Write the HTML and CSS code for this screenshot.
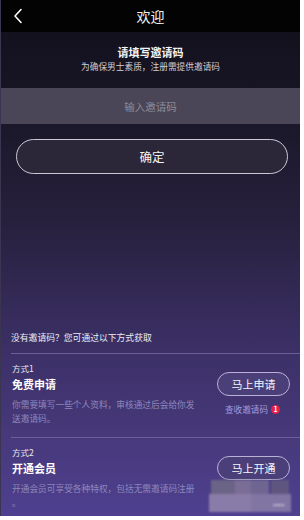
FILE: index.html
```html
<!DOCTYPE html>
<html lang="zh">
<head>
<meta charset="utf-8">
<link rel="stylesheet" href="styles.css">
</head>
<body>
<div class="app">
  <header class="topbar">
    <svg class="back" width="10" height="16" viewBox="0 0 10 16"><path d="M8 1.5 L2 8 L8 14.5" fill="none" stroke="#fff" stroke-width="1.6" stroke-linecap="round" stroke-linejoin="round"/></svg>
    <div class="title">欢迎</div>
  </header>
  <main class="content">
    <div class="intro">
      <div class="intro-title">请填写邀请码</div>
      <div class="intro-sub">为确保男士素质，注册需提供邀请码</div>
    </div>
    <div class="input-band">输入邀请码</div>
    <div class="confirm-wrap"><div class="confirm">确定</div></div>
    <div class="spacer"></div>
    <div class="hint">没有邀请码？您可通过以下方式获取</div>
    <div class="divider"></div>
    <section class="way">
      <div class="way-text">
        <div class="way-label">方式1</div>
        <div class="way-name">免费申请</div>
        <div class="way-desc">你需要填写一些个人资料，审核通过后会给你发送邀请码。</div>
      </div>
      <div class="way-side">
        <div class="pill">马上申请</div>
        <div class="check">查收邀请码<span class="badge">1</span></div>
      </div>
    </section>
    <div class="divider"></div>
    <section class="way">
      <div class="way-text">
        <div class="way-label">方式2</div>
        <div class="way-name">开通会员</div>
        <div class="way-desc">开通会员可享受各种特权，包括无需邀请码注册。</div>
      </div>
      <div class="way-side">
        <div class="pill">马上开通</div>
      </div>
    </section>
  </main>
  <div class="wm">
    <span class="wm-a"></span><span class="wm-b"></span><span class="wm-c"></span><span class="wm-d"></span>
    <span class="wm-e"></span><span class="wm-f"></span>
    <span class="wm-dots">....</span>
  </div>
</div>
</body>
</html>
```

FILE: styles.css
```css
html, body {
  margin: 0;
  padding: 0;
  background: #ffffff;
}
body {
  font-family: "Noto Sans CJK SC", "Noto Sans", sans-serif;
  color: #ffffff;
}
.app {
  position: relative;
  width: 299px;
  height: 516px;
  border-left: 1px solid #3a3550;
  display: flex;
  flex-direction: column;
  overflow: hidden;
  background: linear-gradient(180deg, #12101c 0px, #171424 90px, #1e1a2f 150px, #28213f 230px, #342a57 300px, #3d3169 360px, #463879 430px, #4f4090 516px);
}
.topbar {
  height: 32px;
  background: #030303;
  display: flex;
  align-items: center;
  justify-content: center;
  position: relative;
  flex: none;
}
.back {
  position: absolute;
  left: 12px;
  top: 8px;
}
.title {
  font-size: 14px;
  line-height: 16px;
  color: #f2f2f2;
}
.content {
  flex: 1;
  display: flex;
  flex-direction: column;
}
.intro {
  padding-top: 12px;
  text-align: center;
  height: 44px;
}
.intro-title {
  font-size: 11px;
  line-height: 16px;
  font-weight: 700;
  color: #f4f4f4;
}
.intro-sub {
  font-size: 8.7px;
  line-height: 13px;
  color: #cfcdd6;
}
.input-band {
  height: 36px;
  background: #4a4657;
  color: #8d8a98;
  font-size: 10.5px;
  display: flex;
  align-items: center;
  justify-content: center;
}
.confirm-wrap {
  padding: 15px 12px 0 15px;
}
.confirm {
  height: 33px;
  border: 1px solid #cbc7d4;
  border-radius: 18px;
  background: #2b2739;
  display: flex;
  align-items: center;
  justify-content: center;
  font-size: 12.5px;
  color: #f4f4f4;
}
.spacer {
  height: 158px;
}
.hint {
  padding-left: 10px;
  font-size: 8.8px;
  line-height: 12px;
  color: #ececf2;
}
.divider {
  margin: 9px 0 0 10px;
  height: 1px;
  background: #6b5f98;
}
.way {
  display: flex;
  padding: 9px 0 0 11px;
  height: 74px;
  box-sizing: border-box;
}
.way-text {
  flex: 1;
  min-width: 0;
}
.way-label {
  font-size: 8.5px;
  line-height: 11px;
  color: #e8e6f0;
}
.way-name {
  margin-top: 3px;
  font-size: 11px;
  line-height: 14px;
  font-weight: 700;
  color: #ffffff;
}
.way-desc {
  margin-top: 7px;
  font-size: 8.7px;
  line-height: 14px;
  color: #8f87bb;
  width: 186px;
  line-break: anywhere;
}
.way-side {
  width: 83px;
  display: flex;
  flex-direction: column;
  align-items: flex-start;
  padding-top: 9px;
  padding-right: 10px;
  box-sizing: border-box;
}
.pill {
  width: 73px;
  height: 24px;
  box-sizing: border-box;
  border: 1px solid #b9b2d6;
  border-radius: 12px;
  background: #4a3f78;
  display: flex;
  align-items: center;
  justify-content: center;
  font-size: 11px;
  color: #f4f4f8;
}
.check {
  margin-top: 7px;
  margin-left: 8px;
  font-size: 8.6px;
  line-height: 12px;
  color: #a39bde;
  display: flex;
  align-items: center;
  gap: 3px;
}
.badge {
  width: 9px;
  height: 9px;
  border-radius: 50%;
  background: #e5204a;
  color: #fff;
  font-size: 7px;
  line-height: 9px;
  text-align: center;
  font-weight: 700;
}
.wm {
  position: absolute;
  left: 208px;
  top: 480px;
  width: 84px;
  height: 34px;
  filter: blur(1.2px);
}
.wm span {
  position: absolute;
  display: block;
}
.wm-a { left: 2px; top: 0; width: 24px; height: 14px; background: #6c6486; }
.wm-b { left: 26px; top: 0; width: 16px; height: 14px; background: #7a6e96; }
.wm-c { left: 42px; top: 0; width: 18px; height: 14px; background: #6e6690; }
.wm-d { left: 62px; top: 0; width: 18px; height: 14px; background: #5f5680; }
.wm-e { left: 0; top: 14px; width: 42px; height: 18px; background: #8a7ca8; }
.wm-f { left: 42px; top: 14px; width: 40px; height: 18px; background: #8175a4; }
.wm-dots { left: 64px; top: 16px; font-size: 9px; color: #ffffff; font-weight: 700; }
```
